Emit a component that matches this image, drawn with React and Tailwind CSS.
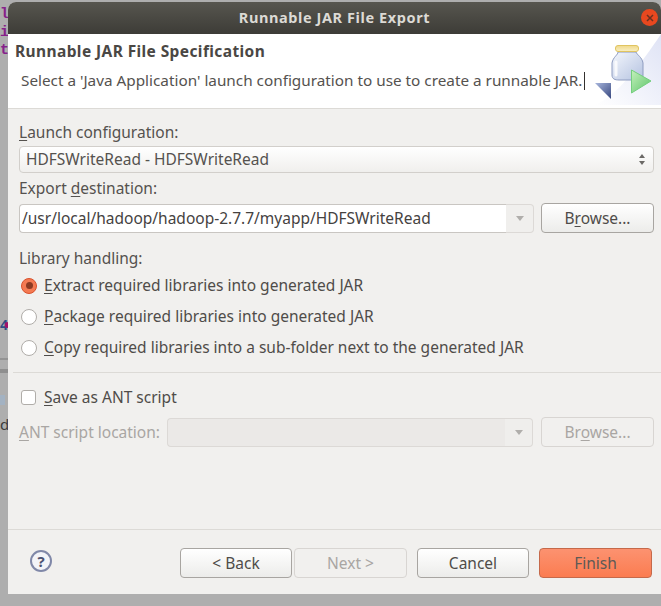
import React from "react";

const ui = { fontFamily: '"Noto Sans", "Open Sans", sans-serif' };

const Key = ({ children }) => <span className="underline underline-offset-2">{children}</span>;

const Btn = ({ children, width, disabled, primary }) => (
    <div
        className={`flex h-[30px] items-center justify-center rounded-[4px] border pt-[1px] text-[15.5px] ${width} ${
            primary
                ? "border-[#c5694a] bg-gradient-to-b from-[#fc9270] to-[#fb7c50] text-[#5e5a56]"
                : disabled
                ? "border-[#d8d5d2] bg-[#f1f0ee] text-[#a9a6a3]"
                : "border-[#a8a5a1] bg-gradient-to-b from-white to-[#ececea] text-[#4f4c49]"
        }`}
    >
        {children}
    </div>
);

const Radio = ({ checked, children }) => (
    <div className="flex h-[31px] items-center">
        <div
            className={`ml-[2px] flex h-4 w-4 items-center justify-center rounded-full border ${
                checked ? "border-[#d9512c] bg-[#f47a52]" : "border-[#b0ada9] bg-white"
            }`}
        >
            {checked && <div className="h-[7px] w-[7px] rounded-full bg-[#8c3a22]" />}
        </div>
        <span className="ml-[7px] pt-[1px] text-[15.5px] text-[#4f4c49]">{children}</span>
    </div>
);

const ComboArrow = ({ faded }) => (
    <div
        className={`flex w-[28px] items-center justify-center self-stretch rounded-r-[4px] border border-l-0 border-[#dcd9d6] ${
            faded ? "bg-[#efeeec]" : "bg-[#f0efed]"
        }`}
    >
        <div className="h-0 w-0 border-x-[4px] border-t-[5px] border-x-transparent border-t-[#b0aeab]" />
    </div>
);

const JarIcon = () => (
    <svg width="66" height="72" viewBox="0 0 66 72" className="absolute right-0 top-0">
        <defs>
            <linearGradient id="wash" x1="0" y1="1" x2="1" y2="0">
                <stop offset="0" stopColor="#ffffff" />
                <stop offset="0.55" stopColor="#eef0fa" />
                <stop offset="1" stopColor="#dfe3f5" />
            </linearGradient>
            <linearGradient id="glass" x1="0" y1="0" x2="1" y2="1">
                <stop offset="0" stopColor="#f4f7fd" />
                <stop offset="1" stopColor="#b4c2e0" />
            </linearGradient>
            <linearGradient id="lid" x1="0" y1="0" x2="0" y2="1">
                <stop offset="0" stopColor="#f0d98a" />
                <stop offset="1" stopColor="#f9efc4" />
            </linearGradient>
            <linearGradient id="play" x1="0" y1="0" x2="1" y2="1">
                <stop offset="0" stopColor="#c4f0bc" />
                <stop offset="1" stopColor="#5dc56a" />
            </linearGradient>
            <linearGradient id="back" x1="0" y1="0" x2="1" y2="1">
                <stop offset="0" stopColor="#a8b6dc" />
                <stop offset="1" stopColor="#37477f" />
            </linearGradient>
        </defs>
        <path d="M66 0 V71 H0 C22 62 46 30 66 0 Z" fill="url(#wash)" />
        <path d="M23 18 C23 21 18 23 17 29 V41 C17 45 20 46 24 46 H41 C45 46 48 45 48 41 V29 C47 23 42 21 41 18 Z" fill="url(#glass)" stroke="#8e9cc0" strokeWidth="1" />
        <path d="M21 28 V41" stroke="#ffffff" strokeWidth="3" strokeLinecap="round" opacity="0.8" />
        <rect x="20.5" y="11.5" width="23" height="6" rx="2.5" fill="url(#lid)" stroke="#e0c460" strokeWidth="1" />
        <path d="M36.5 36 L56 47 L36.5 59 Z" fill="url(#play)" stroke="#74cf7e" strokeWidth="1" />
        <path d="M0 49 L16 49 L16 65 Z" fill="url(#back)" />
    </svg>
);

const App = () => {
    return (
        <div className="relative h-[606px] w-[661px] overflow-hidden bg-[#aeaeae]" style={ui}>
            {/* bits of the editor showing behind the dialog */}
            <div className="absolute left-0 top-[6px] text-[15px] font-bold leading-[18px] text-[#86208a]" style={{ fontFamily: '"Liberation Mono", monospace' }}>
                <div>l</div>
                <div>i</div>
                <div>t</div>
            </div>
            <div className="absolute left-0 top-[318px] text-[14px] font-bold leading-none text-[#2f4f86]">4</div>
            <div className="absolute left-[5px] top-[322px] h-[6px] w-[4px] rounded-full bg-[#a3116b]" />
            <div className="absolute left-0 top-[358px] h-[2px] w-[8px] bg-[#949494]" />
            <div className="absolute left-0 top-[369px] h-[4px] w-[8px] bg-[#8f8f8f]" />
            <div className="absolute left-0 top-[395px] h-[10px] w-[5px] bg-[#a3b2c2]" />
            <div className="absolute left-0 top-[417px] text-[15px] leading-none text-[#3c3c3c]">d</div>

            <div className="absolute left-[8px] top-[2px] flex h-[592px] w-[653px] flex-col overflow-hidden rounded-t-[8px] bg-[#f1f0ee]">
                {/* title bar */}
                <div className="relative flex h-[32px] shrink-0 items-center justify-center bg-gradient-to-b from-[#57564f] to-[#3d3c37]">
                    <span className="text-[14.5px] font-bold tracking-[0.6px] text-[#dcdad5]">Runnable JAR File Export</span>
                    <div className="absolute right-[3px] top-[7px] flex h-[17px] w-[17px] items-center justify-center rounded-full bg-[#e8481f]">
                        <svg width="8" height="8" viewBox="0 0 8 8">
                            <path d="M1 1 L7 7 M7 1 L1 7" stroke="#6b3020" strokeWidth="1.5" />
                        </svg>
                    </div>
                </div>

                {/* banner */}
                <div className="relative h-[75px] shrink-0 border-b border-[#dcdad6] bg-white">
                    <div className="pl-[7px] pt-[7px] text-[15.5px] font-bold leading-[20px] tracking-[0.4px] text-[#4a4744]">Runnable JAR File Specification</div>
                    <div className="pl-[13px] pt-[9px] text-[15.3px] leading-[20px] text-[#55524f]">
                        Select a 'Java Application' launch configuration to use to create a runnable JAR.
                    </div>
                    <div className="absolute left-[576px] top-[38px] h-[18px] w-px bg-[#33312f]" />
                    <JarIcon />
                </div>

                {/* form */}
                <div className="flex flex-1 flex-col">
                    <div className="pl-[11px] pr-[7px] pt-[13px]">
                        <div className="text-[15.5px] leading-[20px] text-[#55524f]">
                            <Key>L</Key>aunch configuration:
                        </div>
                        <div className="relative mt-[4px] flex h-[27px] w-[635px] items-center rounded-[4px] border border-[#d2cfcb] bg-gradient-to-b from-white to-[#f0efed] pl-[6px] text-[15.5px] text-[#55524f]">
                            HDFSWriteRead - HDFSWriteRead
                            <div className="absolute right-[8px] top-[7px] flex flex-col gap-[3px]">
                                <div className="h-0 w-0 border-x-[3.5px] border-b-[4px] border-x-transparent border-b-[#6b6966]" />
                                <div className="h-0 w-0 border-x-[3.5px] border-t-[4px] border-x-transparent border-t-[#6b6966]" />
                            </div>
                        </div>
                        <div className="mt-[5px] text-[15.5px] leading-[20px] text-[#55524f]">
                            Export <Key>d</Key>estination:
                        </div>
                        <div className="mt-[5px] flex items-center justify-between">
                            <div className="flex h-[29px] w-[515px]">
                                <div className="flex flex-1 items-center rounded-l-[4px] border border-r-0 border-[#c9c6c2] bg-white pl-[2px] pt-[1px] text-[15.5px] text-[#45423f]">
                                    /usr/local/hadoop/hadoop-2.7.7/myapp/HDFSWriteRead
                                </div>
                                <ComboArrow />
                            </div>
                            <Btn width="w-[113px]">
                                <span>B<Key>r</Key>owse...</span>
                            </Btn>
                        </div>
                        <div className="mt-[15px] text-[15.5px] leading-[20px] text-[#55524f]">Library handling:</div>
                        <div className="mt-[2px]">
                            <Radio checked>
                                <Key>E</Key>xtract required libraries into generated JAR
                            </Radio>
                            <Radio>
                                <Key>P</Key>ackage required libraries into generated JAR
                            </Radio>
                            <Radio>
                                <Key>C</Key>opy required libraries into a sub-folder next to the generated JAR
                            </Radio>
                        </div>
                    </div>

                    <div className="ml-[5px] mt-[9px] h-px bg-[#dcdad6]" />

                    <div className="pl-[11px] pr-[7px]">
                        <div className="mt-[9px] flex h-[31px] items-center">
                            <div className="ml-[2px] h-[15px] w-[15px] rounded-[3px] border border-[#b0ada9] bg-white" />
                            <span className="ml-[8px] text-[15.5px] text-[#4f4c49]">
                                <Key>S</Key>ave as ANT script
                            </span>
                        </div>
                        <div className="mt-[4px] flex items-center justify-between">
                            <div className="flex items-center">
                                <span className="w-[148px] pt-[1px] text-[15.5px] text-[#a9a6a3]">
                                    <Key>A</Key>NT script location:
                                </span>
                                <div className="flex h-[29px] w-[366px]">
                                    <div className="flex-1 rounded-l-[4px] border border-r-0 border-[#dcd9d6] bg-[#ebe9e7]" />
                                    <ComboArrow faded />
                                </div>
                            </div>
                            <Btn width="w-[113px]" disabled>
                                <span>Br<Key>o</Key>wse...</span>
                            </Btn>
                        </div>
                    </div>

                    {/* footer */}
                    <div className="mt-auto flex h-[65px] shrink-0 items-start border-t border-[#dcdad6] pt-[18px]">
                        <div className="ml-[22px] mt-[2px] flex h-[22px] w-[22px] items-center justify-center rounded-full border-2 border-[#8088a8] bg-[#f3f4f8] text-[15px] font-bold text-[#4c5272]">?</div>
                        <div className="ml-[128px] flex">
                            <Btn width="w-[112px]">&lt; Back</Btn>
                            <div className="ml-[2px]">
                                <Btn width="w-[113px]" disabled>Next &gt;</Btn>
                            </div>
                            <div className="ml-[10px]">
                                <Btn width="w-[112px]">Cancel</Btn>
                            </div>
                            <div className="ml-[10px]">
                                <Btn width="w-[113px]" primary>Finish</Btn>
                            </div>
                        </div>
                    </div>
                </div>
            </div>
        </div>
    );
};

export default App;
